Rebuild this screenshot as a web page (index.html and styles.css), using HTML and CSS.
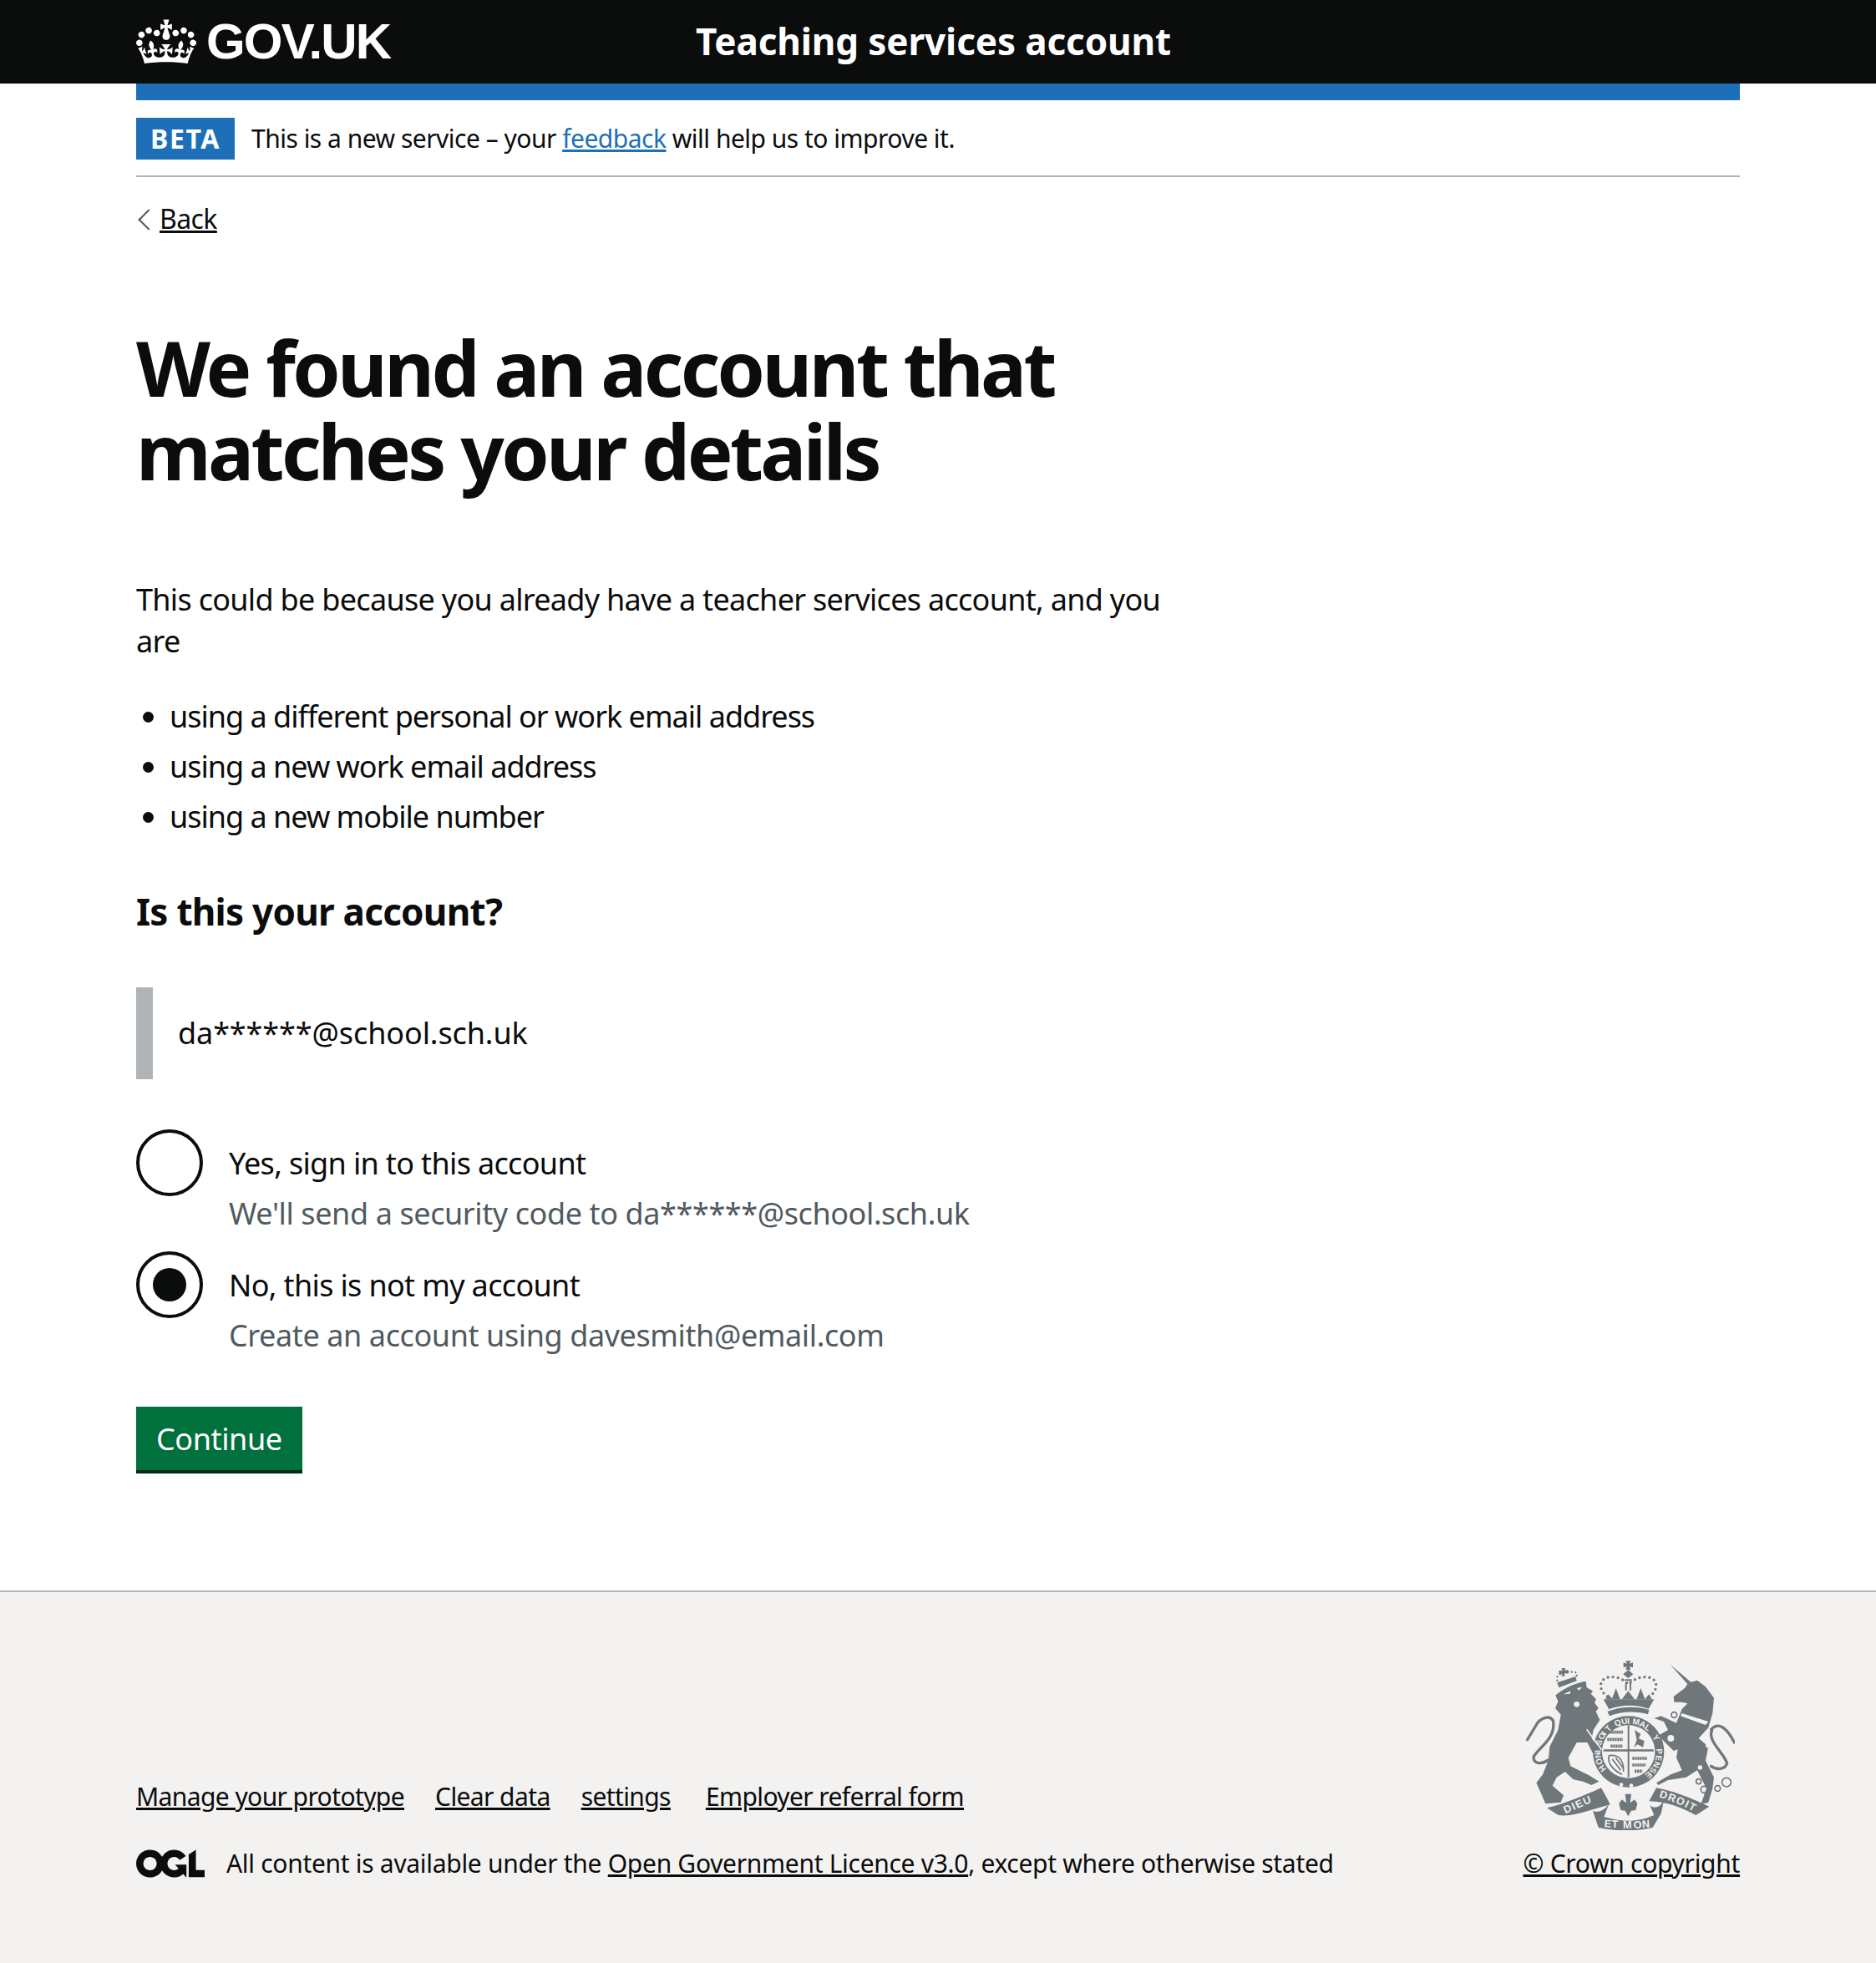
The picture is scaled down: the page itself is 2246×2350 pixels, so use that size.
FILE: index.html
```html
<!DOCTYPE html>
<html lang="en">
<head>
    <meta charset="UTF-8">
    <title>We found an account that matches your details</title>
    <link rel="stylesheet" href="styles.css">
</head>
<body>
<header class="header">
    <div class="container header-inner">
        <a class="logo" href="#">
            <svg class="crown" viewBox="0 0 132 97" width="72" height="60"><path fill="#fff" fill-rule="evenodd" d="M25 30.2c3.5 1.5 7.7-.2 9.1-3.7 1.5-3.6-.2-7.8-3.9-9.2-3.6-1.4-7.6.3-9.1 3.9-1.4 3.5.3 7.5 3.9 9zM9 39.5c3.6 1.5 7.8-.2 9.2-3.7 1.5-3.6-.2-7.8-3.9-9.1-3.6-1.5-7.6.2-9.1 3.8-1.4 3.5.3 7.5 3.8 9zM4.4 57.2c3.5 1.5 7.7-.2 9.1-3.8 1.5-3.6-.2-7.7-3.9-9.1-3.5-1.5-7.6.3-9.1 3.8-1.4 3.5.3 7.6 3.9 9.1zm38.3-21.4c3.5 1.5 7.7-.2 9.1-3.8 1.5-3.6-.2-7.7-3.9-9.1-3.6-1.5-7.6.3-9.1 3.8-1.3 3.6.4 7.7 3.9 9.1zm64.4-5.6c-3.6 1.5-7.8-.2-9.1-3.7-1.5-3.6.2-7.8 3.8-9.2 3.6-1.4 7.7.3 9.2 3.9 1.3 3.5-.4 7.5-3.9 9zm15.9 9.3c-3.6 1.5-7.7-.2-9.1-3.7-1.5-3.6.2-7.8 3.7-9.1 3.6-1.5 7.7.2 9.2 3.8 1.5 3.5-.3 7.5-3.8 9zm4.7 17.7c-3.6 1.5-7.8-.2-9.2-3.8-1.5-3.6.2-7.7 3.9-9.1 3.6-1.5 7.7.3 9.2 3.8 1.3 3.5-.4 7.6-3.9 9.1zM89.3 35.8c-3.6 1.5-7.8-.2-9.2-3.8-1.4-3.6.2-7.7 3.9-9.1 3.6-1.5 7.7.3 9.2 3.8 1.4 3.6-.3 7.7-3.9 9.1zM69.7 17.7l8.9 4.7V9.3l-8.9 2.8c-.2-.3-.5-.6-.9-.9L72.4 0H59.6l3.5 11.2c-.3.3-.6.5-.9.9l-8.8-2.8v13.1l8.8-4.7c.3.3.6.7.9.9l-5 15.4v.1c-.2.8-.4 1.6-.4 2.4 0 4.1 3.1 7.5 7 8.1h.2c.3 0 .7.1 1 .1.4 0 .7 0 1-.1h.2c4-.6 7.1-4.1 7.1-8.1 0-.8-.1-1.7-.4-2.4V34l-5.1-15.4c.4-.2.7-.6 1-.9zM66 92.8c16.9 0 32.8 1.1 47.1 3.2 4-16.9 8.9-26.7 14-33.5l-9.6-3.4c1 4.9 1.1 7.2 0 10.2-1.5-1.4-3-4.3-4.2-8.7L108.6 76c2.8-2 5-3.2 7.5-3.3-4.4 9.4-10 11.9-13.6 11.2-4.3-.8-6.3-4.6-5.6-7.9 1-4.7 5.7-5.9 8-.5 4.3-8.7-3-11.4-7.6-8.8 7.1-7.2 7.9-13.5 2.1-21.1-8 6.1-8.1 12.3-4.5 20.8-4.7-5.4-12.1-2.5-9.5 6.2 3.4-5.2 7.9-2 7.2 3.1-.6 4.3-6.4 7.8-13.5 7.2-10.3-.9-10.9-8-11.2-13.8 2.5-.5 7.1 1.8 11 7.3L80.2 60c-4.1 4.4-8 5.3-12.3 5.4 1.4-4.4 8-11.6 8-11.6H55.5s6.4 7.2 7.9 11.6c-4.2-.1-8-1-12.3-5.4l1.4 16.4c3.9-5.5 8.5-7.7 10.9-7.3-.3 5.8-.9 12.8-11.1 13.8-7.2.6-12.9-2.9-13.5-7.2-.7-5 3.8-8.3 7.1-3.1 2.7-8.7-4.6-11.6-9.4-6.2 3.7-8.5 3.6-14.7-4.6-20.8-5.8 7.6-5 13.9 2.2 21.1-4.7-2.6-11.9.1-7.7 8.8 2.3-5.5 7.1-4.2 8.1.5.7 3.3-1.3 7.1-5.7 7.9-3.5.7-9-1.8-13.5-11.2 2.5.1 4.7 1.3 7.5 3.3l-4.7-15.4c-1.2 4.4-2.7 7.2-4.3 8.7-1.1-3-.9-5.3 0-10.2l-9.5 3.4c5 6.9 9.9 16.7 14 33.5 14.8-2.1 30.8-3.2 47.7-3.2z"/></svg>
            <span class="logo-text">GOV.UK</span>
        </a>
        <a class="service-name" href="#">Teaching services account</a>
    </div>
</header>

<div class="container">
    <div class="blue-bar"></div>
    <div class="phase-banner">
        <strong class="tag">BETA</strong>
        <span>This is a new service – your <a class="link-blue" href="#">feedback</a> will help us to improve it.</span>
    </div>
    <a class="back-link" href="#">Back</a>

    <main class="main">
        <h1 class="title">We found an account that matches your details</h1>
        <p class="intro">This could be because you already have a teacher services account, and you are</p>
        <ul class="list">
            <li>using a different personal or work email address</li>
            <li>using a new work email address</li>
            <li>using a new mobile number</li>
        </ul>
        <h2 class="subtitle">Is this your account?</h2>
        <div class="inset">da******@school.sch.uk</div>

        <div class="radio">
            <span class="radio-mark"></span>
            <div class="radio-text">
                <div class="radio-label">Yes, sign in to this account</div>
                <div class="radio-hint">We'll send a security code to da******@school.sch.uk</div>
            </div>
        </div>
        <div class="radio">
            <span class="radio-mark checked"></span>
            <div class="radio-text">
                <div class="radio-label">No, this is not my account</div>
                <div class="radio-hint">Create an account using davesmith@email.com</div>
            </div>
        </div>
        <a class="button" href="#">Continue</a>
    </main>
</div>

<footer class="footer">
    <div class="container footer-inner">
        <div class="footer-left">
            <ul class="footer-links">
                <li><a href="#">Manage your prototype</a></li>
                <li><a href="#">Clear data</a></li>
                <li><a href="#">settings</a></li>
                <li class="footer-link-last"><a href="#">Employer referral form</a></li>
            </ul>
            <div class="licence">
                <svg class="ogl" viewBox="0 0 483.2 195.7" width="82" height="34"><path fill="#0b0c0c" d="M421.5 142.8V.1l-50.7 32.3v161.1h112.4v-50.7zm-122.3-9.6A47.12 47.12 0 0 1 221 97.8c0-26 21.1-47.1 47.1-47.1 16.7 0 31.4 8.7 39.7 21.8l42.7-27.2A97.63 97.63 0 0 0 268.1 0c-36.5 0-68.3 20.1-85.1 49.7A98 98 0 0 0 97.8 0C43.9 0 0 43.9 0 97.8s43.9 97.8 97.8 97.8c36.5 0 68.3-20.1 85.1-49.7a97.76 97.76 0 0 0 149.6 25.4l19.4 22.2h3v-87.8h-80l24.3 27.5zM97.8 145c-26 0-47.1-21.1-47.1-47.1s21.1-47.1 47.1-47.1 47.2 21 47.2 47S123.8 145 97.8 145"/></svg>
                <span>All content is available under the <a href="#">Open Government Licence v3.0</a>, except where otherwise stated</span>
            </div>
        </div>
        <div class="footer-right">
            <svg class="crest" viewBox="80 48 750 612" width="250" height="204">
                <g class="crest-fill">
                    <!-- lion -->
                    <path d="M186 175 C215 150 260 130 295 125 L298 148 L320 160 L313 170 L332 190 L326 202 L340 222 L331 234 L345 264 L322 300 L316 330 L345 372 L352 408 L326 395 L300 345 L262 345 L232 400 L240 430 L280 450 L305 462 L342 485 L315 498 L285 485 L250 478 L220 450 L190 470 L175 500 L215 535 L205 560 L150 565 L135 530 L117 490 L140 460 L160 410 L165 360 L195 300 L205 245 L185 222 L195 198 Z"/>
                    <!-- unicorn -->
                    <path d="M598 65 L672 128 L695 122 L725 145 L755 185 L750 240 L735 292 L700 330 L735 360 L725 410 L755 470 L750 510 L735 560 L708 568 L728 510 L695 445 L655 470 L590 480 L555 498 L548 490 L600 460 L640 445 L620 400 L625 370 L610 375 L555 320 L590 300 L575 270 L540 258 L565 250 L620 275 L640 225 L660 205 L640 200 L612 200 L610 180 L650 150 L660 135 Z"/>
                    <!-- shield crown -->
                    <path d="M358 190 L540 190 L520 224 C480 208 420 208 378 226 Z"/>
                    <path d="M372 234 C420 214 480 214 522 228 L518 244 C480 232 420 232 380 250 Z"/>
                    <path d="M438 52 L456 52 L452 62 L464 58 L464 76 L452 72 L456 84 L438 84 L442 72 L430 76 L430 58 L442 62 Z"/>
                    <path d="M447 84 L465 100 L447 114 L429 100 Z"/>
                    <path d="M434 118 L460 118 L460 124 L434 124 Z M436 130 L442 130 L442 158 L436 158 Z M452 130 L458 130 L458 158 L452 158 Z"/>
                    <path d="M403 150 L418 190 L388 190 Z M492 150 L507 190 L477 190 Z M447 160 L470 190 L424 190 Z M375 172 L392 190 L366 190 Z M522 172 L532 190 L506 190 Z"/>
                    <!-- lion crown -->
                    <path d="M192 130 L258 108 L262 124 L198 148 Z"/>
                    <path d="M208 78 L222 78 L218 86 L232 84 L232 98 L218 96 L220 106 L208 108 L210 98 L198 100 L198 86 L210 88 Z"/>
                    <!-- ring -->
                    <path fill-rule="evenodd" d="M448 250 A128 128 0 1 1 447.9 250 Z M448 283 A95 95 0 1 0 448.1 283 Z"/>
                    <!-- shield cross -->
                    <path d="M358 370 L538 370 L538 377 L358 377 Z M445 283 L451 283 L451 470 L445 470 Z"/>
                    <!-- fleur under shield -->
                    <path d="M436 530 L458 530 L454 562 L470 550 L480 565 L474 588 L458 590 L447 610 L436 590 L420 588 L414 565 L424 550 L440 562 Z"/>
                    <!-- ribbon -->
                    <path d="M155 580 C220 565 290 535 350 508 C362 530 374 550 382 568 L322 585 C270 602 220 612 195 605 Z"/>
                    <path d="M320 590 C350 605 378 568 380 560 L360 612 C430 632 480 632 540 606 L525 570 C535 580 555 585 575 555 L565 600 L535 650 C470 666 400 664 340 650 Z"/>
                    <path d="M522 556 L548 508 C620 522 680 548 738 575 L690 606 C640 580 590 558 522 556 Z"/>
                    <!-- arms: lion rampant, harp -->
                    <path d="M470 300 L492 315 L484 330 L505 340 L500 362 L480 352 L468 362 L478 335 Z"/>
                </g>
                <g class="crest-line">
                    <path stroke-width="10" stroke-linecap="round" d="M178 268 C165 245 130 255 115 285 L85 335 M178 272 C185 330 130 360 108 395 C103 422 135 425 160 408"/>
                    <path stroke-width="10" stroke-linecap="round" d="M745 298 C770 270 800 290 828 345 M748 300 C730 340 790 380 802 420 C795 442 765 445 745 430"/>
                    <path stroke-width="10" stroke-linecap="round" stroke-dasharray="0 18" d="M372 180 C332 150 345 105 395 110 C420 112 435 125 447 135 C460 125 480 110 505 110 C552 108 562 150 524 180"/>
                    <path stroke-width="7" stroke-linecap="round" stroke-dasharray="0 14" d="M192 122 C180 100 230 88 240 92 C262 88 268 100 258 112"/>
                    <path stroke-width="11" stroke-dasharray="7 2" d="M378 308 H428 M372 334 H428 M384 358 H426 M462 402 H516 M462 426 H510 M470 448 H498"/>
                    <path stroke-width="5" d="M378 392 C370 420 395 445 425 460 M378 392 C400 388 432 395 430 450 M390 405 L420 445 M402 400 L428 435"/>
                    <circle cx="700" cy="485" r="9" stroke-width="5"/>
                    <circle cx="720" cy="514" r="12" stroke-width="5"/>
                    <circle cx="768" cy="510" r="10" stroke-width="5"/>
                    <circle cx="800" cy="488" r="16" stroke-width="5"/>
                    <circle cx="612" cy="246" r="10" stroke-width="5"/>
                </g>
                <g class="crest-gap">
                    <circle cx="262" cy="208" r="10"/>
                    <circle cx="600" cy="330" r="12"/>
                    <circle cx="735" cy="355" r="10"/>
                    <circle cx="705" cy="435" r="8"/>
                    <circle cx="422" cy="497" r="7"/>
                    <circle cx="458" cy="500" r="7"/>
                    <path d="M640 240 L735 270 L725 282 L635 250 Z"/>
                    <path d="M215 172 L240 160 L238 170 Z M262 150 L282 146 L270 158 Z"/>
                </g>
                <path class="crest-cut" d="M298 298 L352 372"/>
                <g class="crest-type">
                    <text class="crest-ring" x="369 357 350 348 349 350 357 366 376 390 403 425 444 452 462 485 504 520 533 542 547 547 543 533 520" y="440 420 399 380 368 357 337 321 308 298 289 281 278 278 279 285 295 308 325 345 368 390 411 431 448" rotate="-128 -115 -102 -91 -84 -78 -66 -55 -46 -36 -27 -13 -2 3 8 22 34 46 58 70 84 97 109 122 134">HONI SOIT QUI MAL Y PENSE</text>
                    <text class="crest-ribbon" x="222 251 264 291" y="601 588 582 570" rotate="-25 -24 -23 -22">DIEU</text>
                    <text class="crest-ribbon" x="360 387 412 428 466 498" y="648 650 652 653 654 652" rotate="6 4 0 0 -2 -5">ET MON</text>
                    <text class="crest-ribbon" x="557 587 616 648 661" y="541 551 562 575 582" rotate="18 20 23 26 28">DROIT</text>
                </g>
            </svg>
            <a class="copyright" href="#">© Crown copyright</a>
        </div>
    </div>
</footer>
</body>
</html>
```

FILE: styles.css
```css
* {
    box-sizing: border-box;
}
body {
    margin: 0;
    font-family: "Noto Sans", "Liberation Sans", sans-serif;
    font-size: 36px;
    line-height: 50px;
    letter-spacing: -0.5px;
    color: #0b0c0c;
    background: #fff;
}
a {
    color: inherit;
}
.container {
    width: 1920px;
    margin: 0 auto;
}

.header {
    height: 100px;
    background: #0b0c0c;
    color: #fff;
}
.header-inner {
    display: flex;
    align-items: center;
    height: 100px;
}
.logo {
    display: flex;
    align-items: center;
    width: 670px;
    text-decoration: none;
    color: #fff;
}
.crown {
    margin-right: 12px;
}
.logo-text {
    font-family: "Liberation Sans", sans-serif;
    font-weight: 700;
    font-size: 60px;
    letter-spacing: -1.8px;
}
.service-name {
    margin-bottom: 2px;
    font-weight: 700;
    font-size: 44px;
    letter-spacing: -0.1px;
    color: #fff;
    text-decoration: none;
}

.blue-bar {
    height: 20px;
    background: #1d70b8;
}
.phase-banner {
    display: flex;
    align-items: center;
    height: 92px;
    padding-top: 2px;
    border-bottom: 2px solid #b1b4b6;
    font-size: 30px;
}
.tag {
    width: 118px;
    height: 50px;
    margin-right: 20px;
    text-align: center;
    background: #1d70b8;
    color: #fff;
    font-weight: 700;
    font-size: 32px;
    letter-spacing: 1.6px;
}
.link-blue {
    color: #1d70b8;
}
.back-link {
    display: inline-block;
    position: relative;
    margin-top: 25px;
    padding-left: 28px;
    font-size: 32px;
    letter-spacing: -0.6px;
}
.back-link::before {
    content: "";
    position: absolute;
    left: 6px;
    top: 17px;
    width: 16px;
    height: 16px;
    border-left: 2px solid #505a5f;
    border-bottom: 2px solid #505a5f;
    transform: rotate(45deg);
}

.main {
    padding-top: 103px;
    padding-bottom: 144px;
}
.title {
    width: 1280px;
    margin: 0 0 103px;
    font-size: 92px;
    line-height: 100px;
    font-weight: 700;
    letter-spacing: -3.6px;
}
.intro {
    width: 1260px;
    margin: 0 0 40px;
    letter-spacing: -0.7px;
}
.list {
    margin: 0 0 63px;
    padding: 0 0 0 40px;
    letter-spacing: -1px;
}
.list li {
    margin-bottom: 10px;
}
.subtitle {
    margin: 0 0 66px;
    font-size: 44px;
    line-height: 50px;
    font-weight: 700;
    letter-spacing: -0.75px;
}
.inset {
    display: flex;
    align-items: center;
    height: 110px;
    padding-left: 30px;
    margin-bottom: 60px;
    border-left: 20px solid #b1b4b6;
    letter-spacing: -0.1px;
}
.radio {
    display: flex;
    margin-bottom: 20px;
}
.radio-mark {
    position: relative;
    flex: none;
    width: 80px;
    height: 80px;
    margin-right: 30px;
    border: 4px solid #0b0c0c;
    border-radius: 50%;
}
.radio-mark.checked::after {
    content: "";
    position: absolute;
    left: 16px;
    top: 16px;
    width: 40px;
    height: 40px;
    border-radius: 50%;
    background: #0b0c0c;
}
.radio-text {
    padding: 16px 0 0 1px;
}
.radio-label {
    letter-spacing: -0.65px;
}
.radio-hint {
    margin-top: 10px;
    color: #505a5f;
    letter-spacing: -0.4px;
}
.button {
    display: inline-block;
    margin-top: 40px;
    padding: 14px 24px 12px;
    background: #00703c;
    color: #fff;
    letter-spacing: -0.4px;
    text-decoration: none;
    box-shadow: 0 4px 0 #002d18;
}

.footer {
    height: 446px;
    background: #f3f2f1;
    border-top: 2px solid #b1b4b6;
    font-size: 30px;
    letter-spacing: -0.3px;
}
.footer-inner {
    display: flex;
    justify-content: space-between;
    align-items: flex-end;
    padding-top: 81px;
}
.footer-links {
    display: flex;
    gap: 37px;
    margin: 0 0 30px;
    padding: 0;
    list-style: none;
    letter-spacing: -0.6px;
}
.footer-link-last {
    margin-left: 5px;
}
.licence {
    display: flex;
    align-items: center;
    gap: 26px;
}
.footer-right {
    display: flex;
    flex-direction: column;
    align-items: flex-end;
}
.crest {
    margin-right: 6px;
    margin-bottom: 15px;
}
.crest-fill {
    fill: #6f777b;
}
.crest-line {
    fill: none;
    stroke: #6f777b;
}
.crest-gap {
    fill: #f3f2f1;
}
.crest-cut {
    fill: none;
    stroke: #f3f2f1;
    stroke-width: 5;
}
.crest-type {
    fill: #f3f2f1;
    font-family: "Liberation Sans", sans-serif;
    font-weight: 700;
    letter-spacing: 0;
}
.crest-ring {
    font-size: 30px;
}
.crest-ribbon {
    font-size: 38px;
}
```
